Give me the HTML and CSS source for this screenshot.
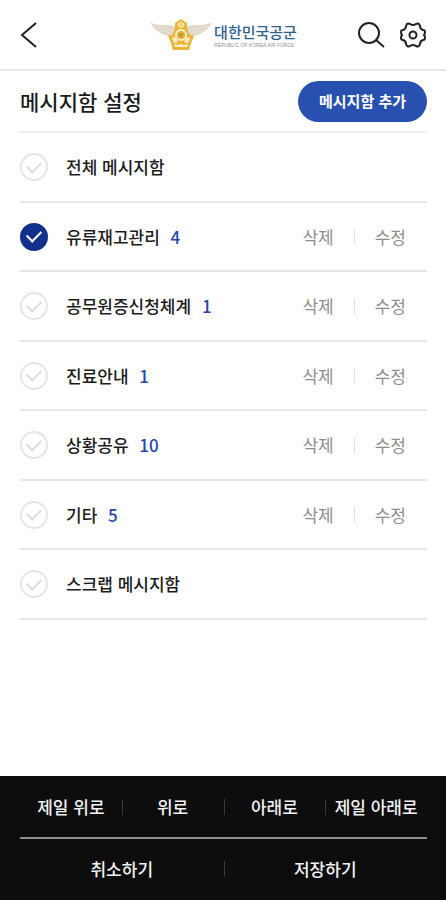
FILE: index.html
```html
<!DOCTYPE html>
<html lang="ko">
<head>
    <meta charset="UTF-8">
    <meta name="viewport" content="width=device-width, initial-scale=1.0">
    <title>메시지함 설정</title>
    <link rel="stylesheet" href="styles.css">
</head>
<body>
    <header class="header">
        <button type="button" class="icon-btn" aria-label="뒤로">
            <svg width="28" height="28" viewBox="0 0 28 28"><path d="M16 2 L2 14 L16 26"/></svg>
        </button>
        <a href="#" class="logo">
            <svg class="emblem" width="62" height="32" viewBox="0 0 62 32">
                <!-- 날개 -->
                <g fill="#e0d7c8">
                    <path d="M0 3 C7 8 16 4 27 8 L24 18 L18 17 L15 16 L12 15 L9 13 L6 11 L3 8 Z"/>
                    <path d="M62 3 C55 8 46 4 35 8 L38 18 L44 17 L47 16 L50 15 L53 13 L56 11 L59 8 Z"/>
                </g>
                <g fill="none" stroke="#efe9dd" stroke-width="0.6">
                    <path d="M4 7 C11 9 17 9 23 12 M9 12 C13 12 18 13 22 15"/>
                    <path d="M58 7 C51 9 45 9 39 12 M53 12 C49 12 44 13 40 15"/>
                </g>
                <!-- 몸통 -->
                <path d="M31 0 L37 4 L37 8 L38 13 L40 16 L44 17 L41 24 L39 31 L23 31 L21 24 L18 17 L22 16 L24 13 L25 8 L25 4 Z" fill="#ebb535"/>
                <path d="M22 19 L25 18 L28 23 L24 24 Z M40 19 L37 18 L34 23 L38 24 Z" fill="#fbeecb"/>
                <path d="M28 5 L31 3 L34 5 L33 8 L29 8 Z" fill="#f3d27a" stroke="#fbeecb"/>
                <circle cx="31" cy="16" r="5" fill="#e8b030" stroke="#fbeecb" stroke-width="2"/>
                <circle cx="31" cy="16" r="2" fill="#b59a52"/>
                <path d="M24 25 L28 26 L31 25 L34 26 L38 25 L37 28 L25 28 Z" fill="#fbeecb"/>
            </svg>
            <span class="logo-text">
                <strong>대한민국공군</strong>
                <small>REPUBLIC OF KOREA AIR FORCE</small>
            </span>
        </a>
        <div class="tools">
            <button type="button" class="icon-btn" aria-label="검색">
                <svg width="28" height="28" viewBox="0 0 28 28"><circle cx="12" cy="12" r="10"/><path d="M19 19 L27 26"/></svg>
            </button>
            <button type="button" class="icon-btn" aria-label="설정">
                <svg width="28" height="28" viewBox="0 0 28 28">
                    <path d="M8 3 Q9 2 11 3 Q14 5 17 3 Q19 2 20 3 L21 5 Q21 8 24 9 Q26 9 26 11 Q26 13 25 14 Q26 15 26 17 Q26 19 24 19 Q21 20 21 23 L20 25 Q19 26 17 25 Q14 23 11 25 Q9 26 8 25 L7 23 Q7 20 4 19 Q2 19 2 17 Q2 15 3 14 Q2 13 2 11 Q2 9 4 9 Q7 8 7 5 Z"/>
                    <circle cx="14" cy="14" r="3.5"/>
                </svg>
            </button>
        </div>
    </header>

    <main class="container">
        <div class="title-bar">
            <h1>메시지함 설정</h1>
            <button type="button" class="add-btn">메시지함 추가</button>
        </div>

        <!-- 메시지함 목록 -->
        <ul class="box-list">
            <li>
                <input type="checkbox" id="box-all">
                <label for="box-all">전체 메시지함</label>
            </li>
            <li>
                <input type="checkbox" id="box-oil" checked>
                <label for="box-oil">유류재고관리 <span class="count">4</span></label>
                <div class="actions"><button type="button">삭제</button><button type="button">수정</button></div>
            </li>
            <li>
                <input type="checkbox" id="box-id">
                <label for="box-id">공무원증신청체계 <span class="count">1</span></label>
                <div class="actions"><button type="button">삭제</button><button type="button">수정</button></div>
            </li>
            <li>
                <input type="checkbox" id="box-clinic">
                <label for="box-clinic">진료안내 <span class="count">1</span></label>
                <div class="actions"><button type="button">삭제</button><button type="button">수정</button></div>
            </li>
            <li>
                <input type="checkbox" id="box-share">
                <label for="box-share">상황공유 <span class="count">10</span></label>
                <div class="actions"><button type="button">삭제</button><button type="button">수정</button></div>
            </li>
            <li>
                <input type="checkbox" id="box-etc">
                <label for="box-etc">기타 <span class="count">5</span></label>
                <div class="actions"><button type="button">삭제</button><button type="button">수정</button></div>
            </li>
            <li>
                <input type="checkbox" id="box-scrap">
                <label for="box-scrap">스크랩 메시지함</label>
            </li>
        </ul>
    </main>

    <!-- 하단 버튼 -->
    <footer class="footer">
        <div class="footer-row">
            <button type="button">제일 위로</button>
            <button type="button">위로</button>
            <button type="button">아래로</button>
            <button type="button">제일 아래로</button>
        </div>
        <div class="footer-row">
            <button type="button">취소하기</button>
            <button type="button">저장하기</button>
        </div>
    </footer>
</body>
</html>
```
FILE: styles.css
```css
* {
    box-sizing: border-box;
}

body {
    display: flex;
    flex-direction: column;
    min-height: 100vh;
    margin: 0;
    background: #fff;
    color: #1c1c1c;
    font-family: "Noto Sans CJK KR", sans-serif;
    font-size: 17px;
    font-weight: 500;
    line-height: 24px;
}

button {
    padding: 0;
    border: none;
    background: none;
    color: inherit;
    font: inherit;
    white-space: nowrap;
    cursor: pointer;
}

.header {
    display: grid;
    grid-template-columns: 1fr auto 1fr;
    align-items: center;
    height: 71px;
    padding: 0 19px 0 20px;
    border-bottom: 2px solid #e6e6e6;
}

.icon-btn {
    display: flex;
}

.icon-btn svg {
    fill: none;
    stroke: #222;
    stroke-width: 2;
}

.logo {
    display: flex;
    align-items: center;
    gap: 2px;
    text-decoration: none;
}

.logo-text {
    display: flex;
    flex-direction: column;
    color: #2f5f8d;
}

.logo-text strong {
    font-size: 15px;
    font-weight: 500;
    line-height: 20px;
}

.logo-text small {
    color: #8a93a0;
    font-family: "Liberation Sans", sans-serif;
    font-size: 5px;
    font-weight: 400;
    line-height: 6px;
}

.tools {
    display: flex;
    justify-content: flex-end;
    gap: 14px;
}

.container {
    flex: 1;
    padding: 0 19px 0 20px;
}

.title-bar {
    display: flex;
    align-items: center;
    justify-content: space-between;
    height: 62px;
    border-bottom: 2px solid #efefef;
}

h1 {
    margin: 0;
    font-size: 21px;
    font-weight: 500;
    line-height: 28px;
}

.add-btn {
    height: 41px;
    padding: 0 21px;
    border-radius: 21px;
    background: #2850b0;
    color: #fff;
    font-size: 15px;
    font-weight: 700;
}

.box-list {
    margin: 0;
    padding: 0;
    list-style: none;
}

.box-list li {
    display: flex;
    align-items: center;
    gap: 18px;
    height: 70px;
    padding-right: 21px;
    border-bottom: 2px solid #e6e6e6;
}

.box-list li:nth-child(even) {
    height: 69px;
}

.box-list input {
    display: flex;
    align-items: center;
    justify-content: center;
    width: 28px;
    height: 28px;
    margin: 0;
    border: 2px solid #e6e6e6;
    border-radius: 50%;
    appearance: none;
}

/* 체크 표시 */
.box-list input::before {
    content: "";
    width: 12px;
    height: 7px;
    margin-bottom: 4px;
    border: solid #dedede;
    border-width: 0 0 2px 2px;
    transform: rotate(-45deg);
}

.box-list input:checked {
    border-color: #12308c;
    background: #12308c;
}

.box-list input:checked::before {
    border-color: #fff;
}

.count {
    margin-left: 6px;
    color: #2447ab;
}

.actions {
    display: flex;
    align-items: center;
    margin-left: auto;
    color: #8e8e8e;
    font-weight: 400;
}

.actions button + button {
    display: flex;
    align-items: center;
}

.actions button + button::before {
    content: "";
    width: 1px;
    height: 15px;
    margin: 0 20px;
    background: #dedede;
}

.footer {
    padding: 0 19px 2px 20px;
    background: #0d0d0d;
    color: #f2f2f2;
}

.footer-row {
    display: grid;
    grid-auto-columns: minmax(0, 1fr);
    grid-auto-flow: column;
    align-items: center;
    height: 61px;
}

.footer-row + .footer-row {
    border-top: 2px solid #8c8c8c;
}

.footer-row button + button {
    background: linear-gradient(#383838, #383838) left center / 1px 16px no-repeat;
}
```
